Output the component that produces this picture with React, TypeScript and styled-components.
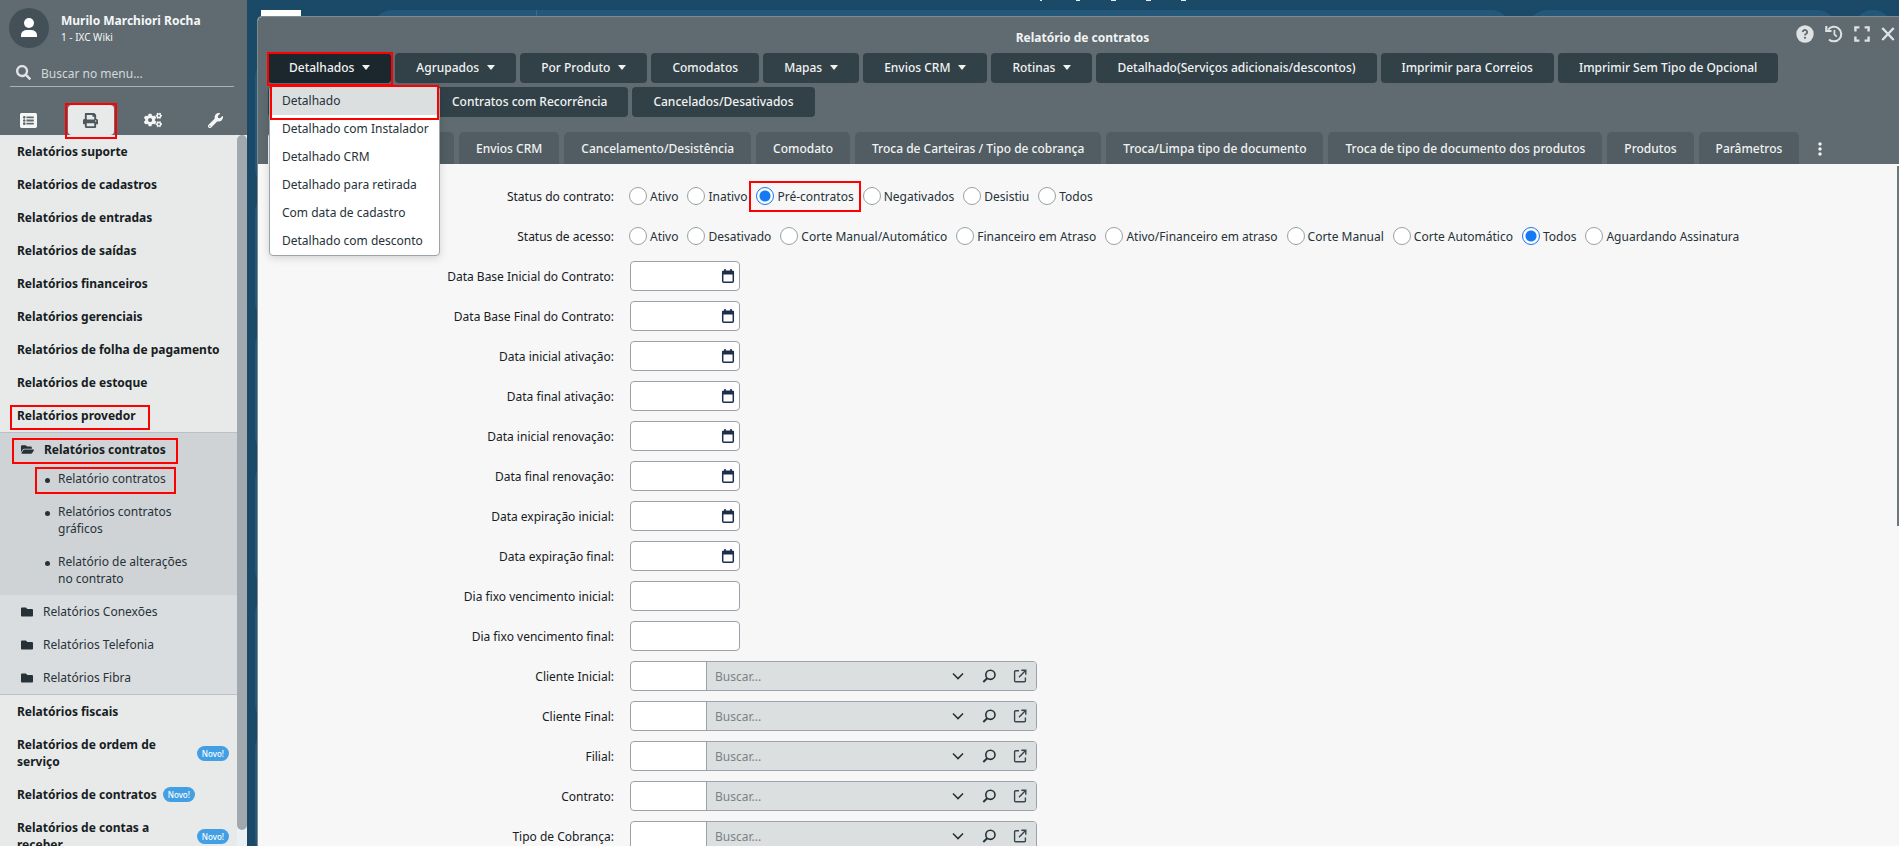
import React from "react";
import styled, { createGlobalStyle, css } from "styled-components";
import { FaSearch, FaPrint, FaCogs, FaWrench, FaListAlt, FaFolder, FaFolderOpen } from "react-icons/fa";
import { MdMoreVert } from "react-icons/md";

const Global = createGlobalStyle`
  * { box-sizing: border-box; }
  body {
    margin: 0;
    height: 100vh;
    overflow: hidden;
    background: #1b4a68;
    color: #263238;
    font: 12px/17px "Noto Sans", "Open Sans", sans-serif;
  }
  #root { height: 100%; }
  button, input { font: inherit; color: inherit; margin: 0; }
  button { cursor: pointer; border: 0; padding: 0; background: none; }
  ul { list-style: none; margin: 0; padding: 0; }
  a { color: inherit; text-decoration: none; }
`;

type Edge = [number, number, number, number];

/* Annotation frame drawn over an element; values are top, right, bottom, left insets. */
const frame = ([t, r, b, l]: Edge) => css`
  position: relative;
  &::after {
    content: "";
    position: absolute;
    z-index: 5;
    inset: ${t}px ${r}px ${b}px ${l}px;
    border: 2px solid #ff0000;
    pointer-events: none;
  }
`;

const Page = styled.div`
  display: flex;
  height: 100%;
`;

/* ---------- sidebar ---------- */

const Sidebar = styled.aside`
  flex: none;
  width: 247px;
  display: flex;
  flex-direction: column;
  background: #e8eaea;
`;

const SideHead = styled.header`
  flex: none;
  height: 135px;
  background: #5f6b71;
  color: #f5f7f7;
`;

const Profile = styled.div`
  display: flex;
  align-items: center;
  gap: 12px;
  padding: 8px 9px 0;
`;

const Avatar = styled.div`
  width: 40px;
  height: 40px;
  border-radius: 50%;
  background: #435057;
  display: flex;
  align-items: center;
  justify-content: center;
`;

const Identity = styled.div`
  padding-top: 2px;
`;

const UserName = styled.div`
  font-weight: 700;
`;

const Company = styled.div`
  font-size: 10px;
`;

const MenuSearch = styled.label`
  display: flex;
  align-items: center;
  gap: 10px;
  height: 27px;
  margin: 12px 13px 0 10px;
  padding: 0 0 2px 6px;
  border-bottom: 1px solid #a9b1b5;
  color: #dfe3e4;
  input {
    flex: 1;
    min-width: 0;
    border: 0;
    padding: 2px 0 0;
    background: none;
    outline: 0;
  }
  input::placeholder { color: #d3d8da; opacity: 1; }
`;

const SideTabs = styled.nav`
  display: flex;
  justify-content: space-between;
  margin-top: 18px;
  padding: 0 8px 0 5px;
`;

const SideTab = styled.button<{ $active?: boolean }>`
  width: 46px;
  height: 30px;
  display: flex;
  align-items: center;
  justify-content: center;
  border-radius: 4px;
  ${(p) => p.$active && css`background: #e8eaea; color: #4c585e; ${frame([-2, -3, -4, -3])}`}
`;

const SideScroll = styled.div`
  flex: 1;
  min-height: 0;
  display: flex;
  overflow: hidden;
`;

const SideList = styled.ul`
  flex: 1;
  min-width: 0;
`;

const SideTrack = styled.div`
  flex: none;
  width: 10px;
  padding-bottom: 16px;
  background: #e9f1f5;
`;

const SideThumb = styled.div`
  height: 100%;
  border-radius: 5px;
  background: #a1a9ae;
`;

const Section = styled.a<{ $mark?: Edge }>`
  display: flex;
  align-items: center;
  gap: 6px;
  padding: 8px 8px 8px 17px;
  font-weight: 700;
  color: #16201f;
  ${(p) => p.$mark && frame(p.$mark)}
`;

const SectionText = styled.span<{ $grow?: boolean }>`
  flex: ${(p) => (p.$grow ? "1" : "none")};
  padding-right: ${(p) => (p.$grow ? "24px" : "0")};
`;

const Novo = styled.span`
  flex: none;
  height: 15px;
  padding: 0 5px;
  border-radius: 8px;
  background: #429fe4;
  color: #fff;
  font-size: 8px;
  font-weight: 500;
  line-height: 16px;
`;

const SubTree = styled.ul`
  border: solid #bac1c5;
  border-width: 1px 0;
  background: #dadddf;
`;

const OpenGroup = styled.li`
  background: #cfd3d6;
`;

const Folder = styled.a<{ $open?: boolean }>`
  display: flex;
  align-items: center;
  gap: 10px;
  padding: 8px 0 ${(p) => (p.$open ? 4 : 8)}px 21px;
  font-weight: ${(p) => (p.$open ? 700 : 400)};
  ${(p) => p.$open && css`color: #16201f; ${frame([5, 59, -2, 12])}`}
  svg { color: #263238; }
`;

const Leaf = styled.a<{ $mark?: Edge }>`
  display: flex;
  gap: 8px;
  padding: 8px 40px 8px 45px;
  &::before {
    content: "";
    flex: none;
    width: 5px;
    height: 5px;
    margin-top: 8px;
    border-radius: 50%;
    background: #263238;
  }
  ${(p) => p.$mark && frame(p.$mark)}
`;

/* ---------- workspace behind the window ---------- */

const Workspace = styled.main`
  flex: 1;
  min-width: 0;
  display: flex;
  flex-direction: column;
  position: relative;
`;

const TopBar = styled.div`
  flex: none;
  display: flex;
  height: 16px;
  padding: 10px 7px 0 14px;
  overflow: hidden;
`;

const LogoTile = styled.div`
  flex: none;
  width: 40px;
  height: 30px;
  margin-right: 72px;
  background: #fff;
`;

const Pill = styled.div<{ $w?: number }>`
  flex: ${(p) => (p.$w ? `0 0 ${p.$w}px` : "1")};
  height: 38px;
  border-radius: 19px;
  background: #23587a;
  & + & { margin-left: 18px; }
`;

const Divider = styled.div`
  width: 1px;
  height: 38px;
  margin-left: 163px;
  background: #396a89;
`;

const ClippedHeading = styled.svg`
  position: absolute;
  top: 0;
  left: 793px;
`;

const Body = styled.div`
  flex: 1;
  min-height: 0;
  display: flex;
`;

const CardRail = styled.div`
  flex: none;
  width: 10px;
  padding: 45px 0 0 8px;
  overflow: hidden;
`;

const RailCard = styled.div`
  width: 120px;
  height: 124px;
  margin-bottom: 10px;
  border-radius: 16px;
  background: #23587a;
`;

/* ---------- window ---------- */

const Window = styled.section`
  flex: 1;
  min-width: 0;
  display: flex;
  flex-direction: column;
  border: solid #7f8a8f;
  border-width: 1px 0 0 1px;
  border-top-left-radius: 5px;
  background: #f7f7f7;
  overflow: hidden;
`;

const WinHead = styled.header`
  flex: none;
  background: #5f6b71;
  color: #f1f3f3;
  border-top-left-radius: 4px;
`;

const TitleRow = styled.div`
  display: grid;
  grid-template-columns: 1fr auto 1fr;
  height: 36px;
  padding: 0 4px 0 12px;
`;

const Title = styled.h1`
  margin: 0;
  padding-top: 12px;
  font-size: 12px;
  font-weight: 700;
`;

const WinTools = styled.div`
  grid-column: 3;
  display: flex;
  justify-content: flex-end;
  align-items: center;
  gap: 11px;
  padding-bottom: 3px;
  color: #dfe2e3;
  button { display: flex; }
`;

const Toolbar = styled.div`
  display: flex;
  flex-wrap: wrap;
  gap: 4px;
  padding: 0 100px 0 10px;
`;

const ToolWrap = styled.div`
  position: relative;
`;

const ToolButton = styled.button<{ $open?: boolean; $w?: number }>`
  display: flex;
  align-items: center;
  gap: 8px;
  width: ${(p) => (p.$w ? `${p.$w}px` : "auto")};
  height: 30px;
  padding: 0 21px 2px;
  border-radius: 4px;
  background: ${(p) => (p.$open ? "#1c272d" : "#324148")};
  font-weight: 500;
  ${(p) => p.$open && frame([-1, -2, -3, -1])}
`;

const Caret = styled.span`
  border: solid transparent;
  border-width: 5px 4px 0;
  border-top-color: currentColor;
`;

const Menu = styled.ul`
  position: absolute;
  z-index: 3;
  top: 33px;
  left: 1px;
  width: 171px;
  border: 1px solid #9aa4a9;
  border-radius: 4px;
  background: #fff;
  color: #263238;
  box-shadow: 0 2px 8px rgba(0, 0, 0, 0.15);
`;

const MenuItem = styled.button<{ $active?: boolean }>`
  display: block;
  width: 100%;
  height: 28px;
  padding: 0 12px 2px;
  text-align: left;
  white-space: nowrap;
  ${(p) => p.$active && css`background: #dbdfe0; ${frame([-2, 0, -5, 0])}`}
`;

const TabStrip = styled.div`
  display: flex;
  gap: 5px;
  height: 47px;
  padding: 15px 0 0 10px;
`;

const Tab = styled.button<{ $active?: boolean; $w?: number }>`
  flex: none;
  width: ${(p) => (p.$w ? `${p.$w}px` : "auto")};
  height: 32px;
  padding: 0 17px;
  border-radius: 5px 5px 0 0;
  background: ${(p) => (p.$active ? "#f7f7f7" : "#515d62")};
  color: ${(p) => (p.$active ? "#263238" : "inherit")};
  font-weight: 500;
`;

const MoreTabs = styled.button`
  display: flex;
  align-items: center;
  padding: 2px 0 0 6px;
`;

const FormArea = styled.div`
  flex: 1;
  min-height: 0;
  display: flex;
  overflow: hidden;
`;

const Form = styled.form`
  flex: 1;
  min-width: 0;
  display: flex;
  flex-direction: column;
  gap: 10px;
  padding: 17px 0 0;
`;

const FormTrack = styled.div`
  flex: none;
  width: 2px;
  padding-top: 2px;
`;

const FormThumb = styled.div`
  height: 53%;
  background: #6d787d;
`;

const Row = styled.div<{ $gap?: number }>`
  flex: none;
  display: flex;
  align-items: center;
  gap: ${(p) => p.$gap ?? 16}px;
  height: 30px;
`;

const RowLabel = styled.label`
  flex: none;
  width: 356px;
  text-align: right;
  color: #16201f;
`;

const RadioSet = styled.div`
  display: flex;
  gap: 9px;
`;

const RadioLabel = styled.label<{ $mark?: boolean }>`
  display: flex;
  align-items: center;
  gap: 3px;
  ${(p) => p.$mark && frame([-6, -7, -7, -7])}
`;

const Radio = styled.input`
  appearance: none;
  width: 18px;
  height: 18px;
  border: 1px solid #98a2a8;
  border-radius: 50%;
  background: #fff;
  &:checked {
    border-color: #1a73f0;
    background: radial-gradient(circle, #1479f5 5px, #fff 6px);
  }
`;

const Box = styled.div<{ $wide?: boolean }>`
  display: flex;
  width: ${(p) => (p.$wide ? 407 : 110)}px;
  height: 30px;
  border: 1px solid #98a2a8;
  border-radius: 4px;
  background: #fff;
  overflow: hidden;
`;

const Plain = styled.input`
  flex: 1;
  min-width: 0;
  border: 0;
  padding: 0 8px;
  background: none;
  outline: 0;
`;

const Code = styled(Plain)`
  flex: none;
  width: 75px;
`;

const DateButton = styled.button`
  display: flex;
  align-items: center;
  padding: 0 4px 0 0;
`;

const Lookup = styled.div`
  flex: 1;
  display: flex;
  align-items: center;
  border-left: 1px solid #98a2a8;
  background: #dbdfe0;
  color: #263238;
  input::placeholder { color: #7c8284; opacity: 1; }
`;

const LookupButtons = styled.div`
  display: flex;
  gap: 15px;
  padding-right: 8px;
  button { display: flex; }
`;

/* ---------- icons ---------- */

const PersonIcon = () => (
  <svg width="18" height="20" viewBox="0 0 18 20" fill="#fff" aria-hidden="true">
    <circle cx="9" cy="5" r="5" />
    <path d="M1 19v-2a6 5 0 0 1 6-5h4a6 5 0 0 1 6 5v2z" />
  </svg>
);

const HelpIcon = () => (
  <svg width="18" height="18" viewBox="0 0 18 18" fill="none" aria-hidden="true">
    <circle cx="9" cy="9" r="8.7" fill="currentColor" />
    <path d="M6.8 7.1a2.2 2 0 1 1 3.4 1.6c-.8.5-1.2.9-1.2 1.7" stroke="#5f6b71" strokeWidth="1.8" />
    <circle cx="9" cy="12.8" r="1.1" fill="#5f6b71" />
  </svg>
);

const HistoryIcon = () => (
  <svg width="18" height="18" viewBox="0 0 18 18" fill="none" stroke="currentColor" strokeWidth="2" aria-hidden="true">
    <path d="M3.2 4.6A7.3 7.3 0 1 1 4 14.4" />
    <path d="M1.3 1v5h5.2" strokeWidth="2.2" />
    <path d="M9.4 5v4.4l2.4 2.2" strokeWidth="1.7" />
  </svg>
);

const ExpandIcon = () => (
  <svg width="16" height="16" viewBox="0 0 16 16" fill="none" stroke="currentColor" strokeWidth="2.4" aria-hidden="true">
    <path d="M1.4 5.4v-4h4M10.6 1.4h4v4M14.6 10.6v4h-4M5.4 14.6h-4v-4" />
  </svg>
);

const CloseIcon = () => (
  <svg width="14" height="14" viewBox="0 0 14 14" fill="none" stroke="currentColor" strokeWidth="2.4" aria-hidden="true">
    <path d="M1.3 1l11.4 12M12.7 1L1.3 13" />
  </svg>
);

const CalendarIcon = () => (
  <svg width="14" height="16" viewBox="0 0 14 16" aria-hidden="true">
    <path d="M4 1v3M10 1v3" stroke="#1c2d4d" strokeWidth="1.6" />
    <rect x="1.7" y="3.2" width="10.6" height="11" rx="1" fill="#fff" stroke="#1c2d4d" strokeWidth="1.5" />
    <path d="M1 3h12v3.4H1z" fill="#1c2d4d" />
  </svg>
);

const ChevronIcon = () => (
  <svg width="16" height="16" viewBox="0 0 16 16" fill="none" stroke="#263238" strokeWidth="1.6" aria-hidden="true">
    <path d="M3 5.5l5 5 5-5" />
  </svg>
);

const LensIcon = () => (
  <svg width="16" height="16" viewBox="0 0 16 16" fill="none" stroke="#263238" strokeWidth="1.6" aria-hidden="true">
    <circle cx="9.4" cy="6.8" r="4.6" />
    <path d="M6.2 10.2L2.3 14" strokeWidth="1.9" />
  </svg>
);

const OpenIcon = () => (
  <svg width="16" height="16" viewBox="0 0 16 16" fill="none" stroke="#37474f" strokeWidth="1.4" aria-hidden="true">
    <path d="M7 2.7H3.6a1 1 0 0 0-1 1v9a1 1 0 0 0 1 1h8.8a1 1 0 0 0 1-1V9.5" />
    <path d="M7 9.3l6.3-6.6M9.3 2.2h4.5v4.6" />
  </svg>
);

/* ---------- data ---------- */

const sectionsTop = [
  "Relatórios suporte",
  "Relatórios de cadastros",
  "Relatórios de entradas",
  "Relatórios de saídas",
  "Relatórios financeiros",
  "Relatórios gerenciais",
  "Relatórios de folha de pagamento",
  "Relatórios de estoque",
];

const tools: { text: string; menu?: boolean }[] = [
  { text: "Agrupados", menu: true },
  { text: "Por Produto", menu: true },
  { text: "Comodatos" },
  { text: "Mapas", menu: true },
  { text: "Envios CRM", menu: true },
  { text: "Rotinas", menu: true },
  { text: "Detalhado(Serviços adicionais/descontos)" },
  { text: "Imprimir para Correios" },
  { text: "Imprimir Sem Tipo de Opcional" },
];

const toolsEnd = ["Contratos com Recorrência", "Cancelados/Desativados"];

const menuItems = [
  "Detalhado",
  "Detalhado com Instalador",
  "Detalhado CRM",
  "Detalhado para retirada",
  "Com data de cadastro",
  "Detalhado com desconto",
];

const tabs = [
  "Envios CRM",
  "Cancelamento/Desistência",
  "Comodato",
  "Troca de Carteiras / Tipo de cobrança",
  "Troca/Limpa tipo de documento",
  "Troca de tipo de documento dos produtos",
  "Produtos",
  "Parâmetros",
];

const radioRows = [
  {
    label: "Status do contrato:",
    name: "contrato",
    checked: "Pré-contratos",
    options: ["Ativo", "Inativo", "Pré-contratos", "Negativados", "Desistiu", "Todos"],
  },
  {
    label: "Status de acesso:",
    name: "acesso",
    checked: "Todos",
    options: [
      "Ativo",
      "Desativado",
      "Corte Manual/Automático",
      "Financeiro em Atraso",
      "Ativo/Financeiro em atraso",
      "Corte Manual",
      "Corte Automático",
      "Todos",
      "Aguardando Assinatura",
    ],
  },
];

const dateRows = [
  "Data Base Inicial do Contrato:",
  "Data Base Final do Contrato:",
  "Data inicial ativação:",
  "Data final ativação:",
  "Data inicial renovação:",
  "Data final renovação:",
  "Data expiração inicial:",
  "Data expiração final:",
];

const dayRows = ["Dia fixo vencimento inicial:", "Dia fixo vencimento final:"];
const lookupRows = ["Cliente Inicial:", "Cliente Final:", "Filial:", "Contrato:", "Tipo de Cobrança:"];

/* ---------- parts ---------- */

function SideMenu() {
  return (
    <Sidebar>
      <SideHead>
        <Profile>
          <Avatar><PersonIcon /></Avatar>
          <Identity>
            <UserName>Murilo Marchiori Rocha</UserName>
            <Company>1 - IXC Wiki</Company>
          </Identity>
        </Profile>
        <MenuSearch>
          <FaSearch size={15} />
          <input type="text" placeholder="Buscar no menu..." aria-label="Buscar no menu" />
        </MenuSearch>
        <SideTabs>
          <SideTab aria-label="Menu"><FaListAlt size={17} /></SideTab>
          <SideTab $active aria-label="Relatórios"><FaPrint size={15} /></SideTab>
          <SideTab aria-label="Configurações"><FaCogs size={18} /></SideTab>
          <SideTab aria-label="Ferramentas"><FaWrench size={15} /></SideTab>
        </SideTabs>
      </SideHead>
      <SideScroll>
        <SideList>
          {sectionsTop.map((s) => (
            <li key={s}><Section href="#">{s}</Section></li>
          ))}
          <li>
            <Section href="#" $mark={[6, 87, 2, 10]}>Relatórios provedor</Section>
            <SubTree>
              <OpenGroup>
                <Folder href="#" $open><FaFolderOpen size={13} />Relatórios contratos</Folder>
                <ul>
                  <li><Leaf href="#" $mark={[5, 61, 1, 35]}>Relatório contratos</Leaf></li>
                  <li><Leaf href="#">Relatórios contratos gráficos</Leaf></li>
                  <li><Leaf href="#">Relatório de alterações no contrato</Leaf></li>
                </ul>
              </OpenGroup>
              <li><Folder href="#"><FaFolder size={12} />Relatórios Conexões</Folder></li>
              <li><Folder href="#"><FaFolder size={12} />Relatórios Telefonia</Folder></li>
              <li><Folder href="#"><FaFolder size={12} />Relatórios Fibra</Folder></li>
            </SubTree>
          </li>
          <li><Section href="#">Relatórios fiscais</Section></li>
          <li><Section href="#"><SectionText $grow>Relatórios de ordem de serviço</SectionText><Novo>Novo!</Novo></Section></li>
          <li><Section href="#"><SectionText>Relatórios de contratos</SectionText><Novo>Novo!</Novo></Section></li>
          <li><Section href="#"><SectionText $grow>Relatórios de contas a receber</SectionText><Novo>Novo!</Novo></Section></li>
        </SideList>
        <SideTrack><SideThumb /></SideTrack>
      </SideScroll>
    </Sidebar>
  );
}

function WindowHeader() {
  return (
    <WinHead>
      <TitleRow>
        <span />
        <Title>Relatório de contratos</Title>
        <WinTools>
          <button aria-label="Ajuda"><HelpIcon /></button>
          <button aria-label="Histórico"><HistoryIcon /></button>
          <button aria-label="Tela cheia"><ExpandIcon /></button>
          <button aria-label="Fechar"><CloseIcon /></button>
        </WinTools>
      </TitleRow>
      <Toolbar>
        <ToolWrap>
          <ToolButton $open>Detalhados<Caret /></ToolButton>
          <Menu>
            {menuItems.map((m, i) => (
              <li key={m}><MenuItem $active={i === 0}>{m}</MenuItem></li>
            ))}
          </Menu>
        </ToolWrap>
        {tools.map((t) => (
          <ToolButton key={t.text}>{t.text}{t.menu && <Caret />}</ToolButton>
        ))}
        <ToolButton $w={159} aria-label="Contratos" />
        {toolsEnd.map((t) => (
          <ToolButton key={t}>{t}</ToolButton>
        ))}
      </Toolbar>
      <TabStrip>
        <Tab $active $w={80} aria-label="Principal" />
        <Tab $w={101} aria-label="Filtros" />
        {tabs.map((t) => (
          <Tab key={t}>{t}</Tab>
        ))}
        <MoreTabs aria-label="Mais abas"><MdMoreVert size={20} /></MoreTabs>
      </TabStrip>
    </WinHead>
  );
}

function ReportForm() {
  return (
    <FormArea>
      <Form>
        {radioRows.map((r) => (
          <Row key={r.name} $gap={15} role="radiogroup" aria-labelledby={r.name}>
            <RowLabel as="span" id={r.name}>{r.label}</RowLabel>
            <RadioSet>
              {r.options.map((o) => (
                <RadioLabel key={o} $mark={o === "Pré-contratos"}>
                  <Radio type="radio" name={r.name} defaultChecked={o === r.checked} />
                  {o}
                </RadioLabel>
              ))}
            </RadioSet>
          </Row>
        ))}
        {dateRows.map((l) => (
          <Row key={l}>
            <RowLabel htmlFor={l}>{l}</RowLabel>
            <Box>
              <Plain id={l} type="text" />
              <DateButton type="button" aria-label="Calendário"><CalendarIcon /></DateButton>
            </Box>
          </Row>
        ))}
        {dayRows.map((l) => (
          <Row key={l}>
            <RowLabel htmlFor={l}>{l}</RowLabel>
            <Box><Plain id={l} type="text" /></Box>
          </Row>
        ))}
        {lookupRows.map((l) => (
          <Row key={l}>
            <RowLabel htmlFor={l}>{l}</RowLabel>
            <Box $wide>
              <Code id={l} type="text" />
              <Lookup>
                <Plain type="text" placeholder="Buscar..." aria-label={`Buscar ${l}`} />
                <LookupButtons>
                  <button type="button" aria-label="Abrir lista"><ChevronIcon /></button>
                  <button type="button" aria-label="Pesquisar"><LensIcon /></button>
                  <button type="button" aria-label="Abrir cadastro"><OpenIcon /></button>
                </LookupButtons>
              </Lookup>
            </Box>
          </Row>
        ))}
      </Form>
      <FormTrack><FormThumb /></FormTrack>
    </FormArea>
  );
}

export default function App() {
  return (
    <>
      <Global />
      <Page>
        <SideMenu />
        <Workspace>
          <TopBar>
            <LogoTile />
            <Pill><Divider /></Pill>
            <Pill $w={308} />
            <Pill $w={38} />
          </TopBar>
          <ClippedHeading width="148" height="1" fill="#e6ecef" aria-hidden="true">
            <path d="M0 0h2v1H0zM36 0h4v1h-4zM71 0h5v1h-5zM106 0h5v1h-5zM141 0h5v1h-5z" />
          </ClippedHeading>
          <Body>
            <CardRail>
              {[0, 1, 2, 3, 4, 5].map((n) => <RailCard key={n} />)}
            </CardRail>
            <Window>
              <WindowHeader />
              <ReportForm />
            </Window>
          </Body>
        </Workspace>
      </Page>
    </>
  );
}
